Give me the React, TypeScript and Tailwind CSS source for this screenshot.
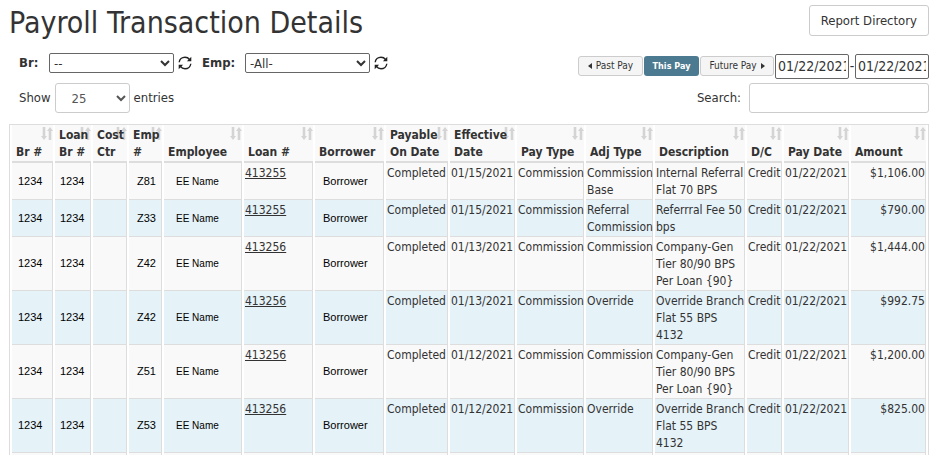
import { useState } from 'react';

type Column = { label: string; width: number };

const columns: Column[] = [
  { label: 'Br #', width: 41 },
  { label: 'Loan Br #', width: 36 },
  { label: 'Cost Ctr', width: 34 },
  { label: 'Emp #', width: 33 },
  { label: 'Employee', width: 78 },
  { label: 'Loan #', width: 69 },
  { label: 'Borrower', width: 69 },
  { label: 'Payable On Date', width: 62 },
  { label: 'Effective Date', width: 65 },
  { label: 'Pay Type', width: 67 },
  { label: 'Adj Type', width: 67 },
  { label: 'Description', width: 90 },
  { label: 'D/C', width: 35 },
  { label: 'Pay Date', width: 65 },
  { label: 'Amount', width: 75 },
];

type Transaction = {
  emp: string;
  loan: string;
  effective: string;
  adjType: string;
  description: string;
  amount: string;
};

const transactions: Transaction[] = [
  { emp: 'Z81', loan: '413255', effective: '01/15/2021', adjType: 'Commission Base', description: 'Internal Referral\nFlat 70 BPS', amount: '$1,106.00' },
  { emp: 'Z33', loan: '413255', effective: '01/15/2021', adjType: 'Referral Commission', description: 'Referrral Fee 50\nbps', amount: '$790.00' },
  { emp: 'Z42', loan: '413256', effective: '01/13/2021', adjType: 'Commission', description: 'Company-Gen\nTier 80/90 BPS\nPer Loan {90}', amount: '$1,444.00' },
  { emp: 'Z42', loan: '413256', effective: '01/13/2021', adjType: 'Override', description: 'Override Branch\nFlat 55 BPS\n4132', amount: '$992.75' },
  { emp: 'Z51', loan: '413256', effective: '01/12/2021', adjType: 'Commission', description: 'Company-Gen\nTier 80/90 BPS\nPer Loan {90}', amount: '$1,200.00' },
  { emp: 'Z53', loan: '413256', effective: '01/12/2021', adjType: 'Override', description: 'Override Branch\nFlat 55 BPS\n4132', amount: '$825.00' },
];

const cell = 'border-r border-b border-[#ddd] pt-0.5 pl-px align-top';
const plainCell = "border-r border-b border-[#ddd] align-middle font-['Liberation_Sans',sans-serif] text-black";

function SortIcon() {
  return (
    <svg className="pointer-events-none absolute top-0.5 right-0 -z-10 h-[13px] w-3" viewBox="0 0 12 13" fill="#d4d4d4" aria-hidden="true">
      <path d="M1.700 0h2.600v9H6l-3 4-3-4h1.700zM7.700 13h2.600V4H12L9 0 6 4h1.700z" />
    </svg>
  );
}

function RefreshIcon() {
  return (
    <svg className="h-3.5 w-3.5" viewBox="0 0 14 14" fill="none" stroke="#222" strokeWidth="1.4" aria-hidden="true">
      <path d="M1.2 6.2C1.5 3.3 4 1.3 7 1.3c1.900 0 3.500.8 4.500 2.200M12.800 7.800c-.3 2.900-2.800 4.900-5.800 4.900-1.900 0-3.500-.8-4.500-2.200" />
      <path d="M13.300.8v4.400H8.900zM.7 13.200V8.800h4.400z" fill="#222" stroke="none" />
    </svg>
  );
}

export default function App() {
  const [start, setStart] = useState('01/22/2021');
  const [end, setEnd] = useState('01/22/2021');
  const [search, setSearch] = useState('');

  return (
    <main className="bg-white pt-[5px] pr-2 pl-[9px] font-['DejaVu_Sans_Condensed','DejaVu_Sans',sans-serif] text-xs text-[#333]">
      <header className="flex items-start justify-between">
        <h1 className="text-[30px] leading-9 whitespace-nowrap">Payroll Transaction Details</h1>
        <button type="button" className="h-[31px] rounded-[3px] border border-[#ccc] bg-white px-[11px] text-[13px] whitespace-nowrap">
          Report Directory
        </button>
      </header>

      <div className="mt-3 flex items-start justify-between">
        <div className="flex h-5 items-center pl-2.5">
          <label htmlFor="branch" className="w-[30px] text-[13px] font-bold">Br:</label>
          <select id="branch" className="h-5 w-[125px] rounded-xs border border-[#666] bg-white text-[13px]">
            <option>--</option>
          </select>
          <button type="button" aria-label="Refresh branches" className="ml-1">
            <RefreshIcon />
          </button>
          <label htmlFor="employee" className="ml-2.5 w-[43px] text-[13px] font-bold">Emp:</label>
          <select id="employee" className="h-5 w-[125px] rounded-xs border border-[#666] bg-white text-[13px]">
            <option>-All-</option>
          </select>
          <button type="button" aria-label="Refresh employees" className="ml-1">
            <RefreshIcon />
          </button>
        </div>
        <div className="flex h-[26px] items-center">
          <div className="flex gap-px text-[10px]">
            <button type="button" className="flex h-5 w-[65px] items-center justify-center gap-1 rounded-[3px] border border-[#ccc] bg-[#f5f5f5]">
              <svg className="h-1.5 w-1" viewBox="0 0 4 6" fill="#333" aria-hidden="true"><path d="M4 0v6L0 3z" /></svg>
              Past Pay
            </button>
            <button type="button" className="h-5 w-[55px] rounded-[3px] bg-[#4c7a90] text-[9px] font-bold text-white">This Pay</button>
            <button type="button" className="flex h-5 w-[74px] items-center justify-center gap-1 rounded-[3px] border border-[#ccc] bg-[#f5f5f5]">
              Future Pay
              <svg className="h-1.5 w-1" viewBox="0 0 4 6" fill="#333" aria-hidden="true"><path d="M0 0v6l4-3z" /></svg>
            </button>
          </div>
          <input
            aria-label="Start date"
            className="ml-px h-[25px] w-[74px] rounded-xs border border-[#666] px-0.5 text-sm"
            value={start}
            onChange={(event) => setStart(event.target.value)}
          />
          <span className="w-1.5 text-center text-sm">-</span>
          <input
            aria-label="End date"
            className="h-[25px] w-[74px] rounded-xs border border-[#666] px-0.5 text-sm"
            value={end}
            onChange={(event) => setEnd(event.target.value)}
          />
        </div>
      </div>

      <div className="mt-1 flex items-center justify-between pl-2.5 text-[13px]">
        <label className="flex items-center gap-1">
          Show
          <select className="h-[30px] w-[75px] rounded-[3px] border border-[#ccc] bg-white pl-3 text-[13px] text-[#555]">
            <option>25</option>
          </select>
          entries
        </label>
        <label className="flex items-center gap-2">
          Search:
          <input
            className="h-[30px] w-[180px] rounded-[3px] border border-[#ccc] px-2"
            value={search}
            onChange={(event) => setSearch(event.target.value)}
          />
        </label>
      </div>

      <table className="mt-[11px] w-full table-fixed border-separate border-spacing-x-0.5 border-spacing-y-0 border border-[#ddd] leading-[17px]">
        <colgroup>
          {columns.map((column) => (
            <col key={column.label} style={{ width: column.width }} />
          ))}
        </colgroup>
        <thead>
          <tr>
            {columns.map((column) => (
              <th key={column.label} className="relative isolate h-[38px] border-b-2 border-[#ddd] bg-[#f9f9f9] pt-0.5 pl-1 text-left align-bottom">
                <button type="button" className="text-left font-bold">
                  {column.label}
                  <SortIcon />
                </button>
              </th>
            ))}
          </tr>
        </thead>
        <tbody>
          {transactions.map((row, index) => (
            <tr key={index} className="bg-[#f9f9f9] even:bg-[#e5f2f8]">
              <td className={`${plainCell} pl-1.5 text-[11px]`}>1234</td>
              <td className={`${plainCell} pl-[5px] text-[11px]`}>1234</td>
              <td className={plainCell} />
              <td className={`${plainCell} pl-2 text-[11px]`}>{row.emp}</td>
              <td className={`${plainCell} pl-3 text-[10px]`}>EE Name</td>
              <td className={cell}>
                <a href="#" className="underline">{row.loan}</a>
              </td>
              <td className={`${plainCell} pl-2 text-[11px]`}>Borrower</td>
              <td className={cell}>Completed</td>
              <td className={cell}>{row.effective}</td>
              <td className={cell}>Commission</td>
              <td className={cell}>{row.adjType}</td>
              <td className={`${cell} whitespace-pre`}>{row.description}</td>
              <td className={cell}>Credit</td>
              <td className={cell}>01/22/2021</td>
              <td className={`${cell} text-right`}>{row.amount}</td>
            </tr>
          ))}
          <tr className="h-9 bg-[#f9f9f9]">
            {columns.map((column) => (
              <td key={column.label} className={cell} />
            ))}
          </tr>
        </tbody>
      </table>
    </main>
  );
}
